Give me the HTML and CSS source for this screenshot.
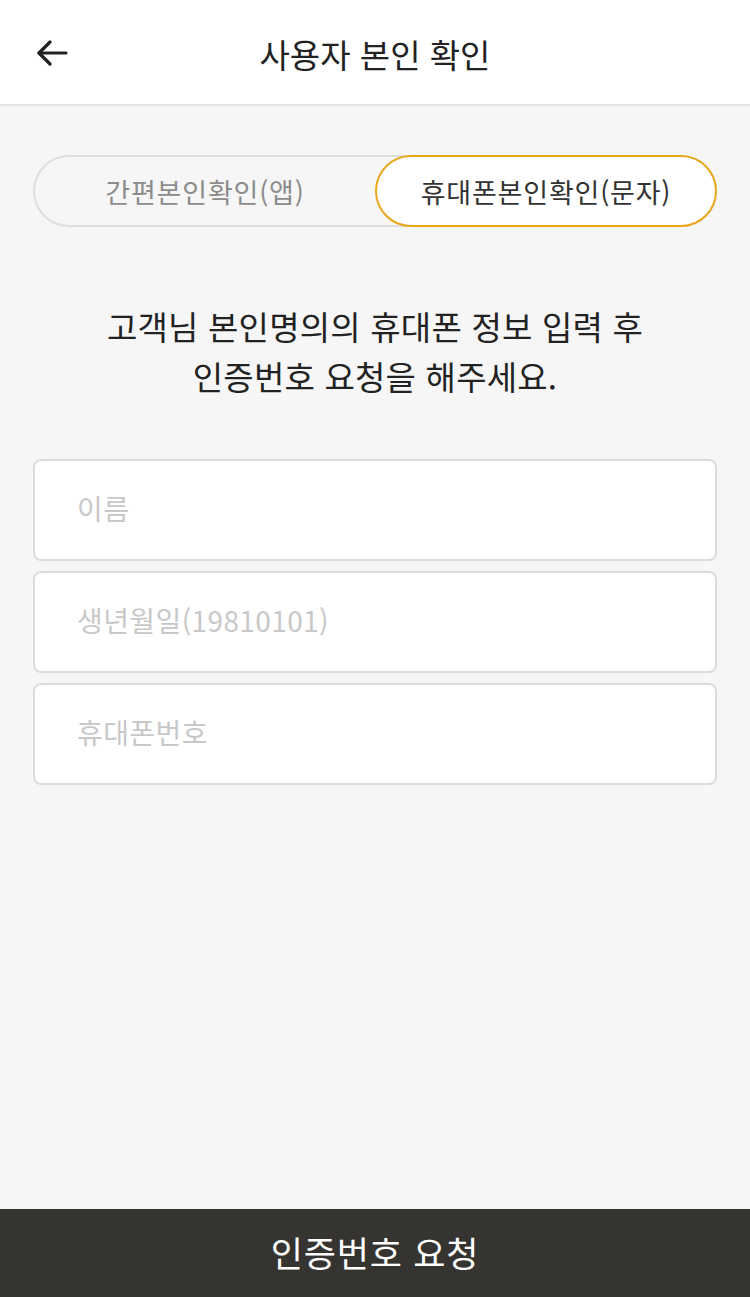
FILE: index.html
```html
<!DOCTYPE html>
<html lang="ko">
<head>
<meta charset="utf-8">
<title>사용자 본인 확인</title>
<link rel="stylesheet" href="styles.css">
</head>
<body>
<div class="page">
  <header class="topbar">
    <button class="back" aria-label="뒤로">
      <svg width="32" height="28" viewBox="0 0 32 28" fill="none" stroke="#222" stroke-width="3.2" stroke-linecap="round" stroke-linejoin="round">
        <path d="M30 14 H3"/>
        <path d="M14 3 L3 14 L14 25"/>
      </svg>
    </button>
    <h1 class="title">사용자 본인 확인</h1>
  </header>

  <main class="content">
    <div class="tabs">
      <div class="tab">간편본인확인(앱)</div>
      <div class="tab active">휴대폰본인확인(문자)</div>
    </div>

    <p class="guide">고객님 본인명의의 휴대폰 정보 입력 후<br>인증번호 요청을 해주세요.</p>

    <div class="fields">
      <div class="field"><span class="placeholder">이름</span></div>
      <div class="field"><span class="placeholder">생년월일(19810101)</span></div>
      <div class="field"><span class="placeholder">휴대폰번호</span></div>
    </div>
  </main>

  <button class="submit">인증번호 요청</button>
</div>
</body>
</html>
```

FILE: styles.css
```css
* { box-sizing: border-box; }

html, body {
  margin: 0;
  padding: 0;
  background: #f6f6f6;
}

body {
  font-family: "Noto Sans CJK KR", "Noto Sans", sans-serif;
  color: #222;
}

.page {
  width: 750px;
  height: 1297px;
  display: flex;
  flex-direction: column;
}

.topbar {
  height: 106px;
  flex: none;
  background: #fff;
  border-bottom: 2px solid #e4e4e4;
  display: flex;
  align-items: center;
  justify-content: center;
  position: relative;
}

.back {
  position: absolute;
  left: 36px;
  top: 39px;
  padding: 0;
  margin: 0;
  border: 0;
  background: none;
  display: flex;
}

.title {
  margin: 0;
  font-size: 33px;
  font-weight: 400;
  line-height: 1;
  color: #222;
  letter-spacing: 0;
  transform: translateY(2px);
}

.content {
  flex: 1;
  padding: 49px 33px 0;
  display: flex;
  flex-direction: column;
}

.tabs {
  height: 72px;
  display: grid;
  grid-template-columns: 1fr 1fr;
  border: 2px solid #dedede;
  border-radius: 36px;
  background: #f6f6f6;
}

.tab {
  display: flex;
  align-items: center;
  justify-content: center;
  font-size: 27px;
  letter-spacing: 0.8px;
  color: #8c8c8c;
  border-radius: 36px;
  margin: -2px;
  padding-top: 1px;
}

.tab.active {
  margin-left: 0;
  background: #fff;
  border: 2px solid #e9a81c;
  color: #333;
}

.guide {
  margin: 74px 0 0;
  text-align: center;
  font-size: 33px;
  line-height: 50px;
  letter-spacing: 0.2px;
  color: #222;
}

.fields {
  margin-top: 58px;
  display: flex;
  flex-direction: column;
  gap: 10px;
}

.field {
  height: 102px;
  background: #fff;
  border: 2px solid #dcdcdc;
  border-radius: 8px;
  display: flex;
  align-items: center;
  padding: 0 0 4px 42px;
}

.placeholder {
  font-size: 28px;
  color: #c8c8c8;
  letter-spacing: 0.4px;
}

.submit {
  flex: none;
  height: 88px;
  width: 100%;
  border: 0;
  margin: 0;
  background: #353430;
  color: #fff;
  font-family: "Noto Sans CJK KR", "Noto Sans", sans-serif;
  font-size: 35px;
  letter-spacing: 0.8px;
  font-weight: 400;
  padding: 0 0 4px;
}
```
